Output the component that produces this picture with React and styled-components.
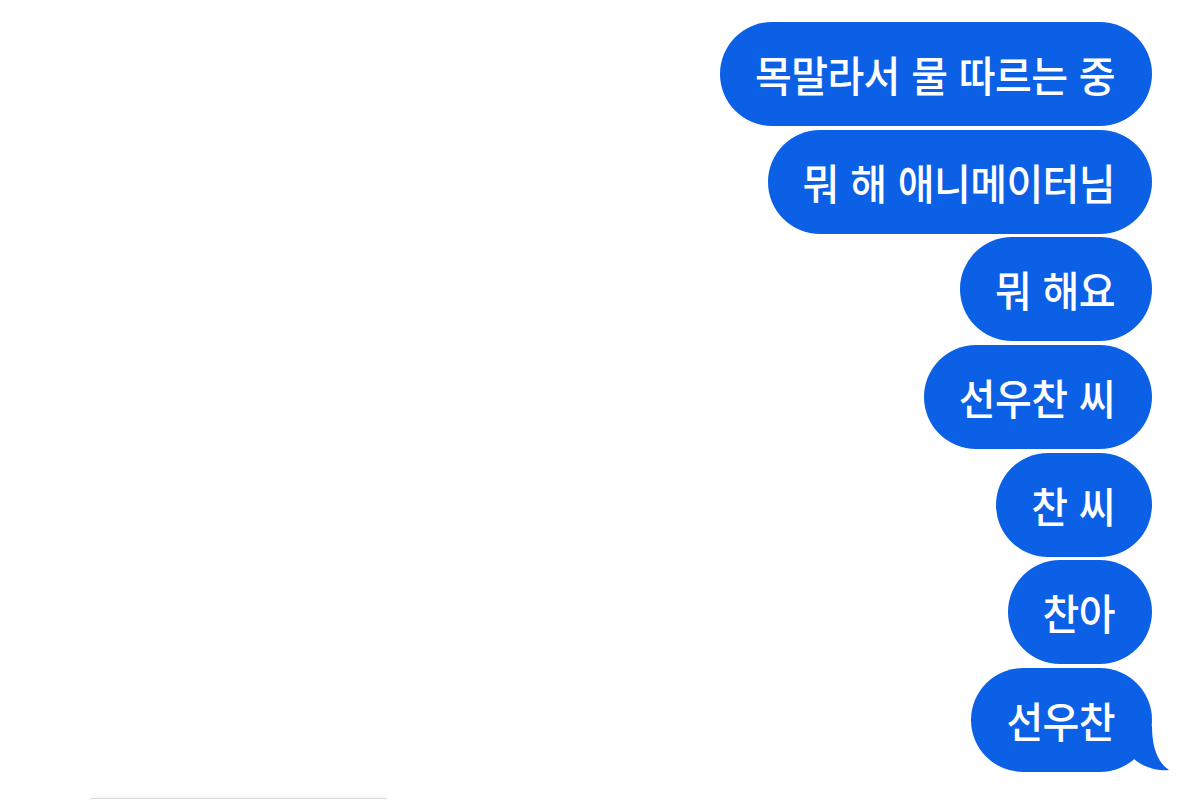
import React from "react";
import styled, { createGlobalStyle } from "styled-components";

const GlobalStyle = createGlobalStyle`
  html, body {
    margin: 0;
    padding: 0;
    background: #ffffff;
  }
  body {
    font-family: "Noto Sans CJK KR", "Noto Sans", sans-serif;
  }
`;

const Screen = styled.div`
  width: 1200px;
  height: 800px;
  overflow: hidden;
  background: #ffffff;
  display: flex;
  flex-direction: column;
  box-sizing: border-box;
  padding-top: 22px;
`;

const Thread = styled.div`
  display: flex;
  flex-direction: column;
  align-items: flex-end;
  gap: 3.67px;
  padding-right: 48px;
`;

const BLUE = "#0b60e6";

const Bubble = styled.div`
  position: relative;
  height: 104px;
  box-sizing: border-box;
  padding: 0 37px 0 35px;
  border-radius: 52px;
  background: ${BLUE};
  color: #ffffff;
  display: flex;
  align-items: center;
  font-size: 40px;
  font-weight: 500;
  letter-spacing: -0.6px;
  word-spacing: 3px;
  white-space: nowrap;
  line-height: 1;
`;

const Label = styled.span`
  display: block;
  transform: scaleY(1.06);
`;

const Tail = styled.svg`
  position: absolute;
  right: -19px;
  bottom: 0;
  width: 42px;
  height: 46px;
  overflow: visible;
`;

const Dock = styled.div`
  margin-top: 26px;
  margin-left: 90px;
  width: 297px;
  height: 40px;
  flex-shrink: 0;
  border-top: 1px solid #dcdcdc;
  border-radius: 3px 3px 0 0;
  box-shadow: 0 -1px 4px rgba(0, 0, 0, 0.06);
  background: #ffffff;
`;

const messages = [
  "목말라서 물 따르는 중",
  "뭐 해 애니메이터님",
  "뭐 해요",
  "선우찬 씨",
  "찬 씨",
  "찬아",
  "선우찬",
];

export default function App() {
  return (
    <>
      <GlobalStyle />
      <Screen>
        <Thread>
          {messages.map((text, i) => (
            <Bubble key={i}>
              <Label>{text}</Label>
              {i === messages.length - 1 && (
                <Tail viewBox="0 0 42 46">
                  <path
                    d="M0 0 L23 0 C23 20 28 36 40 44 C31 45.5 15 42 5 33 L0 33 Z"
                    fill={BLUE}
                  />
                </Tail>
              )}
            </Bubble>
          ))}
        </Thread>
        <Dock />
      </Screen>
    </>
  );
}
